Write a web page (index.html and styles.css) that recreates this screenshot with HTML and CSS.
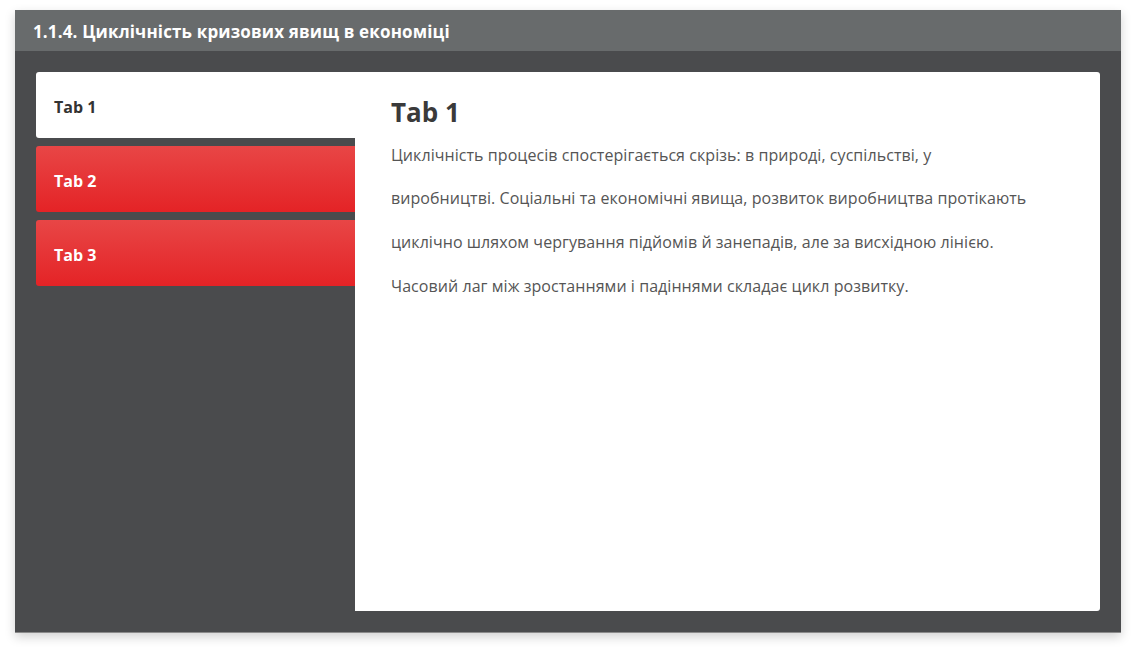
FILE: index.html
```html
<!DOCTYPE html>
<html lang="uk">
<head>
<meta charset="utf-8">
<link rel="stylesheet" href="styles.css">
</head>
<body>
<div class="frame">
  <div class="header">1.1.4. Циклічність кризових явищ в економіці</div>
  <div class="body">
    <div class="tabs">
      <div class="tab active">Tab 1</div>
      <div class="tab">Tab 2</div>
      <div class="tab">Tab 3</div>
    </div>
    <div class="content">
      <h2 class="title">Tab 1</h2>
      <p class="text">Циклічність процесів спостерігається скрізь: в природі, суспільстві, у виробництві. Соціальні та економічні явища, розвиток виробництва протікають циклічно шляхом чергування підйомів й занепадів, але за висхідною лінією. Часовий лаг між зростаннями і падіннями складає цикл розвитку.</p>
    </div>
  </div>
</div>
</body>
</html>
```
FILE: styles.css
```css
html, body {
  margin: 0;
  padding: 0;
  background: #ffffff;
}
body {
  padding: 10px 15px 20px 15px;
  font-family: "Open Sans", "Noto Sans", sans-serif;
}
.frame {
  width: 1106px;
  height: 623px;
  display: flex;
  flex-direction: column;
  box-shadow: 0 4px 10px rgba(0,0,0,0.18);
  border-bottom: 1px solid #8a8a8a;
  box-sizing: border-box;
}
.header {
  height: 41px;
  flex: none;
  background: #686b6c;
  color: #ffffff;
  font-weight: 700;
  font-size: 17px;
  letter-spacing: 0.15px;
  line-height: 43px;
  padding-left: 18px;
  box-sizing: border-box;
}
.body {
  flex: 1;
  background: #4a4b4d;
  padding: 21px;
  display: flex;
  min-height: 0;
}
.tabs {
  width: 319px;
  flex: none;
  display: flex;
  flex-direction: column;
  gap: 8px;
}
.tab {
  height: 66px;
  line-height: 70px;
  padding-left: 18px;
  font-size: 16px;
  font-weight: 700;
  color: #ffffff;
  border-radius: 3px 0 0 3px;
  background: linear-gradient(to bottom, #e84646, #e42326);
}
.tab.active {
  background: #ffffff;
  color: #333333;
}
.content {
  flex: 1;
  background: #ffffff;
  border-radius: 0 3px 3px 0;
  padding: 24px 20px 20px 36px;
}
.title {
  margin: 0;
  font-size: 26px;
  font-weight: 700;
  color: #3a3a3a;
  line-height: 32px;
}
.text {
  max-width: 642px;
  margin: 0;
  margin-top: 5.5px;
  font-size: 16px;
  letter-spacing: 0.06px;
  line-height: 43.7px;
  color: #555555;
}
```
